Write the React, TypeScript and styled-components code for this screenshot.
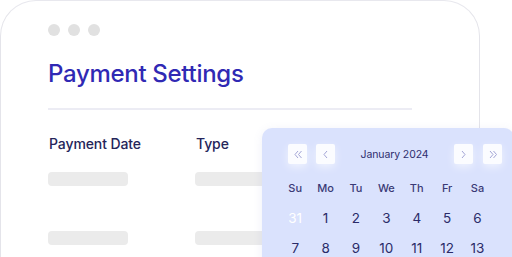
import styled, { createGlobalStyle } from 'styled-components';

const GlobalStyle = createGlobalStyle`
  html, body {
    margin: 0;
    padding: 0;
    background: #ffffff;
    font-family: Inter, 'Noto Sans', sans-serif;
  }
`;

const Stage = styled.div`
  position: relative;
  width: 512px;
  height: 257px;
  overflow: hidden;
  background: #ffffff;
`;

const Card = styled.div`
  box-sizing: border-box;
  width: 480px;
  height: 300px;
  border: 1px solid #e4e4ea;
  border-top-color: #e8e8ee;
  border-radius: 36px 36px 0 0;
  padding: 23px 0 0 47px;
  background: #ffffff;
`;

const Dots = styled.div`
  display: flex;
  gap: 8px;
`;

const Dot = styled.span`
  width: 12px;
  height: 12px;
  border-radius: 50%;
  background: #e1e1e1;
`;

const Title = styled.h1`
  margin: 23px 0 0;
  font-size: 24px;
  line-height: 30px;
  font-weight: 500;
  color: #3029b4;
  letter-spacing: -0.3px;
`;

const Divider = styled.div`
  width: 364px;
  height: 2px;
  margin-top: 19px;
  background: #ececf4;
`;

const Table = styled.div`
  display: grid;
  grid-template-columns: 147px 147px;
  margin-top: 25px;
`;

const Column = styled.div`
  display: flex;
  flex-direction: column;
`;

const Header = styled.div`
  font-size: 14px;
  line-height: 17px;
  font-weight: 500;
  color: #25255a;
  padding-left: 1px;
  letter-spacing: -0.1px;
`;

const Skeleton = styled.div<{ $top: number }>`
  width: 80px;
  height: 14px;
  margin-top: ${({ $top }) => $top}px;
  border-radius: 4px;
  background: #ebebeb;
`;

const Calendar = styled.div`
  position: absolute;
  left: 262px;
  top: 128px;
  box-sizing: border-box;
  width: 252px;
  height: 160px;
  padding: 16px 0 0 18px;
  border-radius: 10px;
  background: #dae2fd;
  box-shadow: 0 2px 10px rgba(120, 130, 200, 0.12);
`;

const NavRow = styled.div`
  display: flex;
  align-items: center;
  width: 214px;
  padding-left: 8px;
`;

const NavButton = styled.div<{ $gap?: number }>`
  display: flex;
  align-items: center;
  justify-content: center;
  width: 19px;
  height: 20px;
  margin-left: ${({ $gap }) => $gap ?? 0}px;
  border-radius: 2px;
  background: #fbfcff;
  box-shadow: 0 3px 8px rgba(255, 255, 255, 0.6);
`;

const Month = styled.div`
  flex: 1;
  text-align: center;
  font-size: 10.5px;
  font-weight: 400;
  color: #2e2e6e;
  letter-spacing: -0.1px;
`;

const Grid = styled.div`
  display: grid;
  grid-template-columns: repeat(7, 30.4px);
  grid-auto-rows: 30px;
  margin-top: 9px;
`;

const WeekDay = styled.div`
  display: flex;
  align-items: center;
  justify-content: center;
  font-size: 11px;
  font-weight: 500;
  color: #3a3a76;
`;

const Day = styled.div<{ $muted?: boolean }>`
  display: flex;
  align-items: center;
  justify-content: center;
  font-size: 13.5px;
  font-weight: 400;
  color: ${({ $muted }) => ($muted ? '#ffffff' : '#2b2b68')};
`;

const Chevron = ({ dir, double }: { dir: 'l' | 'r'; double?: boolean }) => {
  const one = dir === 'l' ? 'M5 1 L2 4.5 L5 8' : 'M2 1 L5 4.5 L2 8';
  const two = dir === 'l' ? 'M8.5 1 L5.5 4.5 L8.5 8' : 'M5.5 1 L8.5 4.5 L5.5 8';
  return (
    <svg width={double ? 10 : 7} height="9" viewBox={double ? '0 0 10 9' : '0 0 7 9'}>
      <path d={one} fill="none" stroke="#a3a5d6" strokeWidth="1" />
      {double && <path d={two} fill="none" stroke="#a3a5d6" strokeWidth="1" />}
    </svg>
  );
};

const weekDays = ['Su', 'Mo', 'Tu', 'We', 'Th', 'Fr', 'Sa'];
const days = [31, 1, 2, 3, 4, 5, 6, 7, 8, 9, 10, 11, 12, 13];

const App = () => {
  return (
    <Stage>
      <GlobalStyle />
      <Card>
        <Dots>
          <Dot />
          <Dot />
          <Dot />
        </Dots>
        <Title>Payment Settings</Title>
        <Divider />
        <Table>
          <Column>
            <Header>Payment Date</Header>
            <Skeleton $top={20} />
            <Skeleton $top={45} />
          </Column>
          <Column>
            <Header>Type</Header>
            <Skeleton $top={20} />
            <Skeleton $top={45} />
          </Column>
        </Table>
      </Card>

      <Calendar>
        <NavRow>
          <NavButton>
            <Chevron dir="l" double />
          </NavButton>
          <NavButton $gap={9}>
            <Chevron dir="l" />
          </NavButton>
          <Month>January 2024</Month>
          <NavButton>
            <Chevron dir="r" />
          </NavButton>
          <NavButton $gap={10}>
            <Chevron dir="r" double />
          </NavButton>
        </NavRow>
        <Grid>
          {weekDays.map((d) => (
            <WeekDay key={d}>{d}</WeekDay>
          ))}
          {days.map((d, i) => (
            <Day key={i} $muted={i === 0}>
              {d}
            </Day>
          ))}
        </Grid>
      </Calendar>
    </Stage>
  );
};

export default App;
